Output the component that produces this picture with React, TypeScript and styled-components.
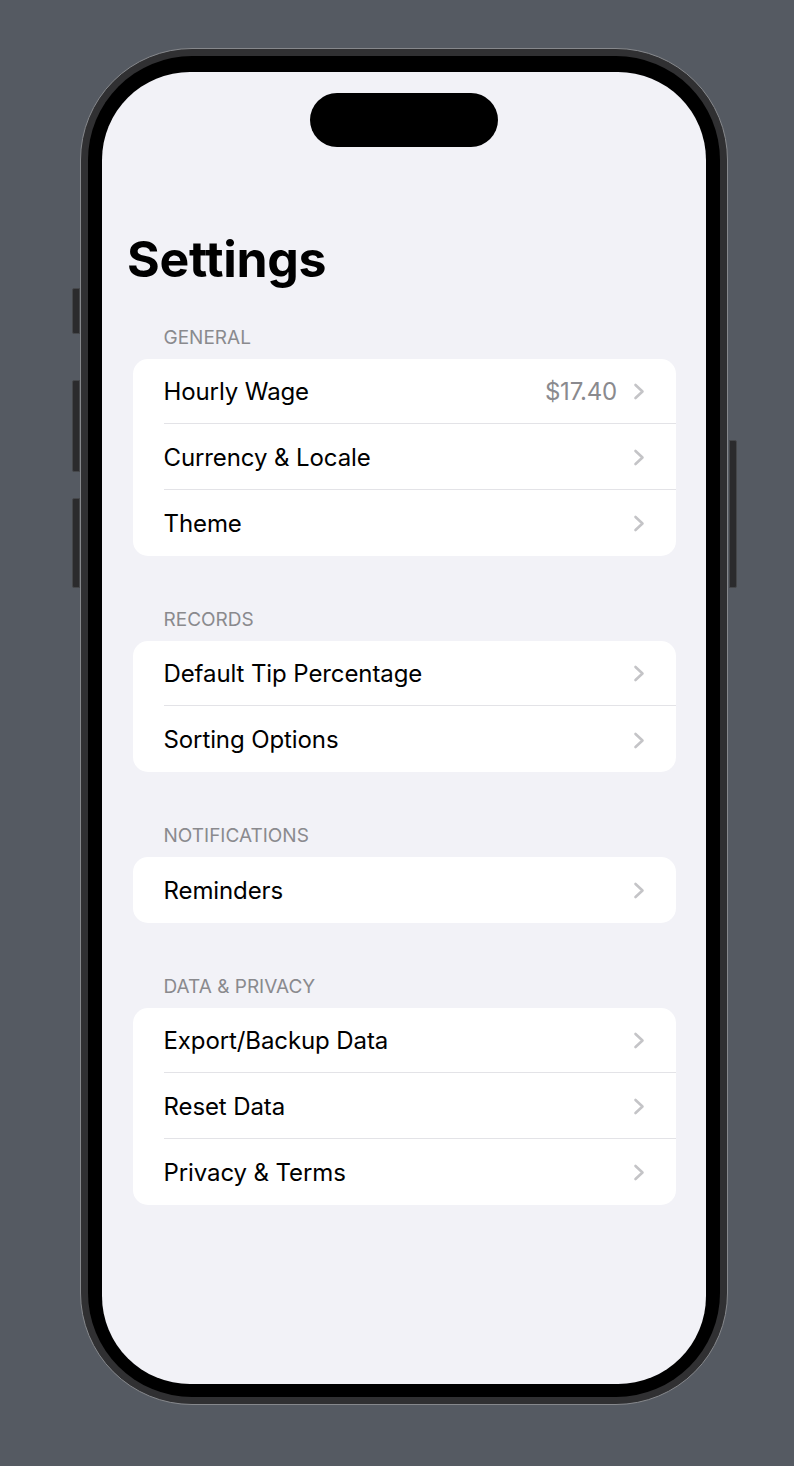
import React from "react";
import styled, { createGlobalStyle } from "styled-components";

const GlobalStyle = createGlobalStyle`
  html, body {
    margin: 0;
    padding: 0;
    background: #555a62;
  }
  body {
    font-family: Inter, "Noto Sans", "Liberation Sans", sans-serif;
    -webkit-font-smoothing: antialiased;
  }
`;

const Stage = styled.div`
  width: 794px;
  height: 1466px;
  box-sizing: border-box;
  padding: 48px 0 0 80px;
  background: #555a62;
`;

const Phone = styled.div`
  position: relative;
  width: 648px;
  height: 1357px;
  box-sizing: border-box;
  border-radius: 112px;
  background: #303032;
  border: 1.5px solid #86888c;
  padding: 7px;
  display: flex;
`;

const SideButton = styled.div<{ $side: "left" | "right"; $top: number; $height: number }>`
  position: absolute;
  ${(p) => (p.$side === "left" ? "left: -9.5px;" : "right: -9.5px;")}
  top: ${(p) => p.$top}px;
  height: ${(p) => p.$height}px;
  width: 8px;
  box-sizing: border-box;
  background: #2b2b2d;
  border: 1px solid #45474a;
  border-radius: ${(p) => (p.$side === "left" ? "2px 0 0 2px" : "0 2px 2px 0")};
`;

const Bezel = styled.div`
  flex: 1;
  display: flex;
  border-radius: 104px;
  background: #000;
  padding: 15.5px 14px 13px 14px;
`;

const Screen = styled.div`
  flex: 1;
  border-radius: 88px;
  background: #f2f2f7;
  overflow: hidden;
  display: flex;
  flex-direction: column;
`;

const Island = styled.div`
  align-self: center;
  margin-top: 21px;
  width: 188px;
  height: 54px;
  border-radius: 27px;
  background: #000;
`;

const Content = styled.div`
  padding: 0 30px 0 30.5px;
  display: flex;
  flex-direction: column;
`;

const Title = styled.h1`
  margin: 82px -5px 0 -5.5px;
  font-size: 50px;
  line-height: 61px;
  font-weight: 700;
  color: #000;
  letter-spacing: -0.3px;
`;

const Section = styled.section<{ $first?: boolean }>`
  margin-top: ${(p) => (p.$first ? 36 : 52)}px;
`;

const SectionHeader = styled.div`
  padding-left: 31px;
  margin-bottom: 9px;
  font-size: 19px;
  line-height: 24px;
  color: #8a8a8e;
  text-transform: uppercase;
`;

const Card = styled.div`
  background: #fff;
  border-radius: 15px;
  overflow: hidden;
`;

const Row = styled.div`
  display: flex;
  height: 65.7px;
  padding-left: 31px;
`;

const RowInner = styled.div<{ $last?: boolean }>`
  flex: 1;
  display: flex;
  align-items: center;
  padding: 2px 31px 0 0;
  box-sizing: border-box;
  border-bottom: ${(p) => (p.$last ? "none" : "1px solid #e3e3e7")};
`;

const Label = styled.span`
  flex: 1;
  font-size: 24px;
  line-height: 30px;
  color: #000;
  letter-spacing: -0.1px;
`;

const Value = styled.span`
  font-size: 24px;
  line-height: 30px;
  color: #8a8a8e;
  margin-right: 16px;
  letter-spacing: -0.2px;
`;

const ChevronSvg = styled.svg`
  display: block;
  flex: none;
`;

const Chevron = () => (
  <ChevronSvg width="12" height="17" viewBox="0 0 12 17">
    <path
      d="M2.5 2 L9.5 8.5 L2.5 15"
      fill="none"
      stroke="#c4c4c7"
      strokeWidth="2.6"
      strokeLinecap="round"
      strokeLinejoin="round"
    />
  </ChevronSvg>
);

type Item = { label: string; value?: string };
type Group = { title: string; items: Item[] };

const groups: Group[] = [
  {
    title: "General",
    items: [
      { label: "Hourly Wage", value: "$17.40" },
      { label: "Currency & Locale" },
      { label: "Theme" },
    ],
  },
  {
    title: "Records",
    items: [{ label: "Default Tip Percentage" }, { label: "Sorting Options" }],
  },
  { title: "Notifications", items: [{ label: "Reminders" }] },
  {
    title: "Data & Privacy",
    items: [
      { label: "Export/Backup Data" },
      { label: "Reset Data" },
      { label: "Privacy & Terms" },
    ],
  },
];

export default function App() {
  return (
    <>
      <GlobalStyle />
      <Stage>
        <Phone>
          <SideButton $side="left" $top={238.5} $height={46} />
          <SideButton $side="left" $top={330.5} $height={92} />
          <SideButton $side="left" $top={448.5} $height={90} />
          <SideButton $side="right" $top={390.5} $height={148} />
          <Bezel>
            <Screen>
              <Island />
              <Content>
                <Title>Settings</Title>
                {groups.map((g, gi) => (
                  <Section key={g.title} $first={gi === 0}>
                    <SectionHeader>{g.title}</SectionHeader>
                    <Card>
                      {g.items.map((it, i) => (
                        <Row key={it.label}>
                          <RowInner $last={i === g.items.length - 1}>
                            <Label>{it.label}</Label>
                            {it.value && <Value>{it.value}</Value>}
                            <Chevron />
                          </RowInner>
                        </Row>
                      ))}
                    </Card>
                  </Section>
                ))}
              </Content>
            </Screen>
          </Bezel>
        </Phone>
      </Stage>
    </>
  );
}
